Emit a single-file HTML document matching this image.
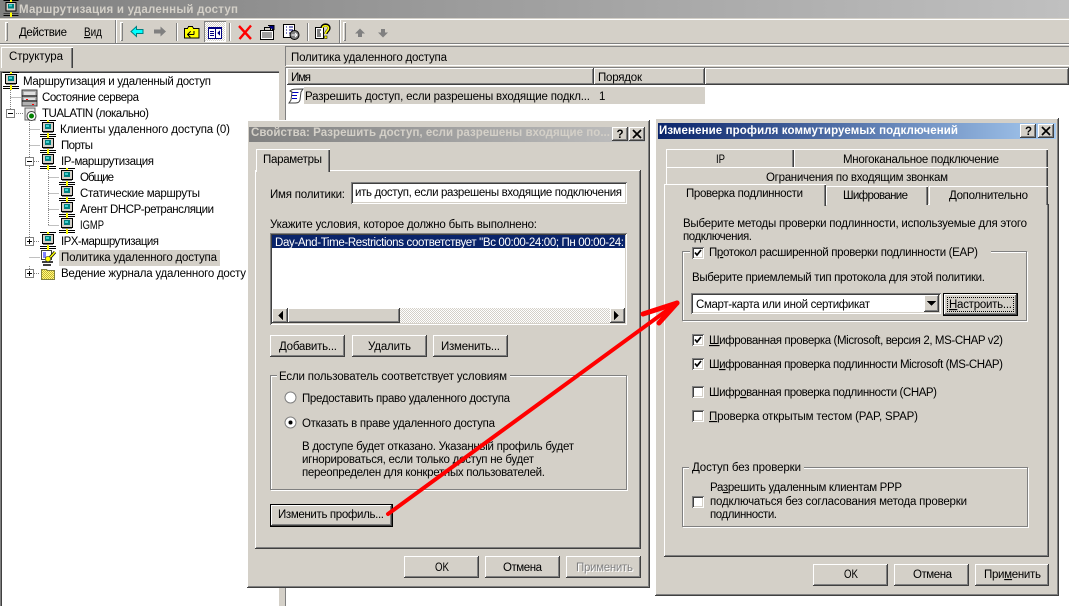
<!DOCTYPE html>
<html><head><meta charset="utf-8"><title>Маршрутизация и удаленный доступ</title>
<style>
html,body{margin:0;padding:0;width:1069px;height:606px;overflow:hidden;background:#fff}
.a{position:absolute;box-sizing:border-box}
.f{background:#d4d0c8}
.r{background:#d4d0c8;box-shadow:inset -1px -1px #404040,inset 1px 1px #fff,inset -2px -2px #808080}
.s{background:#fff;box-shadow:inset 1px 1px #808080,inset -1px -1px #fff,inset 2px 2px #404040,inset -2px -2px #d4d0c8}
.t{background:#d4d0c8;box-shadow:inset 1px 1px #fff,inset -1px 0 #404040,inset -2px 0 #808080}
.g{border:1px solid #808080;box-shadow:1px 1px #fff,inset 1px 1px #fff}
.c{background:#fff;width:12px;height:12px;box-shadow:inset 1px 1px #808080,inset -1px -1px #fff,inset 2px 2px #404040,inset -2px -2px #d4d0c8}
svg{position:absolute;left:0;top:0}
text{font-family:"Liberation Sans","Noto Sans CJK SC",sans-serif;font-size:11.5px;fill:#000;white-space:pre}
.b{font-weight:bold;font-size:11.5px}
.u{text-decoration:underline}
</style></head><body>

<!-- main window chrome -->
<div class="a" style="left:0;top:0;width:1069px;height:18px;background:linear-gradient(90deg,#808080,#c0c0c0)"></div>
<div class="a f" style="left:0;top:18px;width:1069px;height:54px"></div>
<div class="a" style="left:0;top:19px;width:1069px;height:1px;background:#fff"></div>
<div class="a" style="left:0;top:43px;width:1069px;height:1px;background:#808080"></div>
<div class="a" style="left:0;top:44px;width:1069px;height:1px;background:#fff"></div>
<div class="a" style="left:285px;top:46px;width:784px;height:1px;background:#808080"></div>
<div class="a" style="left:285px;top:65px;width:784px;height:1px;background:#fff"></div>
<div class="a" style="left:285px;top:46px;width:1px;height:20px;background:#808080"></div>

<!-- toolbar bevels -->
<div class="a" style="left:5px;top:22px;width:3px;height:19px;background:#d4d0c8;box-shadow:inset 1px 1px #fff,inset -1px -1px #808080"></div>
<div class="a" style="left:115px;top:20px;width:1px;height:23px;background:#808080"></div>
<div class="a" style="left:116px;top:20px;width:1px;height:23px;background:#fff"></div>
<div class="a" style="left:120px;top:22px;width:3px;height:19px;background:#d4d0c8;box-shadow:inset 1px 1px #fff,inset -1px -1px #808080"></div>
<div class="a" style="left:176px;top:23px;width:1px;height:18px;background:#808080"></div>
<div class="a" style="left:177px;top:23px;width:1px;height:18px;background:#fff"></div>
<div class="a" style="left:229px;top:23px;width:1px;height:18px;background:#808080"></div>
<div class="a" style="left:230px;top:23px;width:1px;height:18px;background:#fff"></div>
<div class="a" style="left:307px;top:23px;width:1px;height:18px;background:#808080"></div>
<div class="a" style="left:308px;top:23px;width:1px;height:18px;background:#fff"></div>
<div class="a" style="left:339px;top:20px;width:1px;height:23px;background:#808080"></div>
<div class="a" style="left:340px;top:20px;width:1px;height:23px;background:#fff"></div>
<div class="a" style="left:343px;top:22px;width:3px;height:19px;background:#d4d0c8;box-shadow:inset 1px 1px #fff,inset -1px -1px #808080"></div>
<div class="a" style="left:204px;top:21px;width:22px;height:21px;background:repeating-conic-gradient(#fff 0 25%,#d4d0c8 0 50%) 0 0/2px 2px;box-shadow:inset 1px 1px #808080,inset -1px -1px #fff"></div>

<!-- left tab -->
<div class="a t" style="left:1px;top:47px;width:72px;height:21px"></div>

<!-- tree pane -->
<div class="a" style="left:0;top:71px;width:279px;height:535px;background:#fff;box-shadow:inset 1px 1px #808080,inset 2px 2px #404040"></div>
<div class="a f" style="left:59px;top:250px;width:161px;height:16px"></div>
<div class="a f" style="left:279px;top:71px;width:6px;height:535px"></div>

<!-- right pane -->
<div class="a" style="left:285px;top:67px;width:784px;height:539px;background:#fff;box-shadow:inset 1px 1px #808080"></div>
<div class="a r" style="left:287px;top:68px;width:307px;height:17px"></div>
<div class="a r" style="left:594px;top:68px;width:111px;height:17px"></div>
<div class="a r" style="left:705px;top:68px;width:364px;height:17px"></div>
<div class="a f" style="left:304px;top:87px;width:401px;height:17px"></div>

<!-- dialog 1 -->
<div class="a r" style="left:247px;top:120px;width:403px;height:468px"></div>
<div class="a" style="left:249px;top:127px;width:396px;height:15px;background:linear-gradient(90deg,#808080,#c0c0c0)"></div>
<div class="a r" style="left:612px;top:127px;width:16px;height:14px"></div>
<div class="a r" style="left:629px;top:127px;width:16px;height:14px"></div>
<div class="a r" style="left:255px;top:170px;width:386px;height:379px"></div>
<div class="a t" style="left:256px;top:149px;width:74px;height:23px"></div>
<div class="a s" style="left:351px;top:182px;width:276px;height:22px"></div>
<div class="a s" style="left:270px;top:233px;width:357px;height:92px"></div>
<div class="a" style="left:272px;top:235px;width:353px;height:13px;background:#0a246a"></div>
<div class="a" style="left:288px;top:308px;width:322px;height:15px;background:repeating-conic-gradient(#fff 0 25%,#d4d0c8 0 50%) 0 0/2px 2px"></div>
<div class="a r" style="left:272px;top:308px;width:16px;height:15px"></div>
<div class="a r" style="left:288px;top:308px;width:112px;height:15px"></div>
<div class="a r" style="left:610px;top:308px;width:15px;height:15px"></div>
<div class="a r" style="left:270px;top:335px;width:75px;height:22px"></div>
<div class="a r" style="left:352px;top:335px;width:75px;height:22px"></div>
<div class="a r" style="left:433px;top:335px;width:75px;height:22px"></div>
<div class="a g" style="left:270px;top:375px;width:357px;height:115px"></div>
<div class="a f" style="left:277px;top:372px;width:233px;height:7px"></div>
<div class="a" style="left:270px;top:504px;width:123px;height:23px;background:#000"></div>
<div class="a r" style="left:271px;top:505px;width:121px;height:21px"></div>
<div class="a r" style="left:404px;top:556px;width:75px;height:22px"></div>
<div class="a r" style="left:485px;top:556px;width:75px;height:22px"></div>
<div class="a r" style="left:566px;top:556px;width:75px;height:22px"></div>

<!-- dialog 2 -->
<div class="a r" style="left:655px;top:118px;width:404px;height:478px"></div>
<div class="a" style="left:658px;top:123px;width:398px;height:16px;background:linear-gradient(90deg,#0a246a,#a6caf0)"></div>
<div class="a r" style="left:1020px;top:124px;width:16px;height:14px"></div>
<div class="a r" style="left:1038px;top:124px;width:16px;height:14px"></div>
<div class="a t" style="left:666px;top:149px;width:128px;height:20px"></div>
<div class="a t" style="left:794px;top:149px;width:254px;height:20px"></div>
<div class="a t" style="left:666px;top:167px;width:382px;height:20px"></div>
<div class="a r" style="left:664px;top:204px;width:385px;height:353px"></div>
<div class="a t" style="left:826px;top:186px;width:102px;height:19px"></div>
<div class="a t" style="left:929px;top:186px;width:119px;height:19px"></div>
<div class="a t" style="left:664px;top:184px;width:162px;height:22px"></div>
<div class="a g" style="left:682px;top:251px;width:345px;height:70px"></div>
<div class="a f" style="left:690px;top:247px;width:301px;height:8px"></div>
<div class="a s" style="left:691px;top:293px;width:250px;height:21px"></div>
<div class="a r" style="left:924px;top:295px;width:15px;height:17px"></div>
<div class="a" style="left:943px;top:293px;width:75px;height:23px;background:#000"></div>
<div class="a r" style="left:944px;top:294px;width:73px;height:21px"></div>
<div class="a" style="left:947px;top:297px;width:67px;height:15px;border:1px dotted #000"></div>
<div class="a g" style="left:682px;top:467px;width:346px;height:60px"></div>
<div class="a f" style="left:689px;top:464px;width:115px;height:7px"></div>
<div class="a c" style="left:692px;top:247px"></div>
<div class="a c" style="left:692px;top:334px"></div>
<div class="a c" style="left:692px;top:358px"></div>
<div class="a c" style="left:692px;top:386px"></div>
<div class="a c" style="left:692px;top:410px"></div>
<div class="a c" style="left:692px;top:496px"></div>
<div class="a r" style="left:813px;top:564px;width:75px;height:22px"></div>
<div class="a r" style="left:894px;top:564px;width:75px;height:22px"></div>
<div class="a r" style="left:975px;top:564px;width:74px;height:22px"></div>

<svg width="1069" height="606" viewBox="0 0 1069 606">
<defs>
<symbol id="net" width="16" height="19" viewBox="0 0 16 19" shape-rendering="crispEdges">
<rect x="0" y="0" width="16" height="1" fill="#000"/><rect x="7" y="0" width="2" height="2" fill="#ff0"/>
<rect x="2" y="2" width="12" height="10" fill="#000"/><rect x="3" y="3" width="10" height="8" fill="#d4d0c8"/><rect x="5" y="4" width="6" height="5" fill="#008080"/><rect x="6" y="5" width="3" height="2" fill="#40d0d0"/>
<rect x="3" y="12" width="10" height="1" fill="#808080"/>
<rect x="0" y="14" width="16" height="1" fill="#000"/><rect x="0" y="16" width="16" height="1" fill="#000"/><rect x="7" y="13" width="2" height="5" fill="#ff0"/>
</symbol>
<symbol id="plus" width="9" height="9" viewBox="0 0 9 9" shape-rendering="crispEdges"><rect x=".5" y=".5" width="8" height="8" fill="#fff" stroke="#808080"/><rect x="2" y="4" width="5" height="1"/><rect x="4" y="2" width="1" height="5"/></symbol>
<symbol id="minus" width="9" height="9" viewBox="0 0 9 9" shape-rendering="crispEdges"><rect x=".5" y=".5" width="8" height="8" fill="#fff" stroke="#808080"/><rect x="2" y="4" width="5" height="1"/></symbol>
<symbol id="chk" width="8" height="8" viewBox="0 0 8 8"><path d="M1 3.5 3 6 7 1" fill="none" stroke="#000" stroke-width="1.7"/></symbol>
<pattern id="hatch" width="2" height="2" patternUnits="userSpaceOnUse"><rect width="2" height="2" fill="#ffff80"/><rect width="1" height="1" fill="#c8b030"/><rect x="1" y="1" width="1" height="1" fill="#c8b030"/></pattern>
</defs>

<!-- tree dotted lines -->
<g stroke="#808080" stroke-dasharray="1 1" fill="none" shape-rendering="crispEdges">
<path d="M10.5 90V109M10.5 97.5H21M14 113.5H24"/>
<path d="M29.5 118V157M29.5 129.5H40M29.5 145.5H40M34 161.5H40M29.5 166V237M34 241.5H40M29.5 257.5H40M29.5 266V269M34 273.5H40"/>
<path d="M48.5 170V225.5M48.5 177.5H59M48.5 193.5H59M48.5 209.5H59M48.5 225.5H59"/>
</g>
<use href="#minus" x="6" y="109"/><use href="#minus" x="25" y="157"/><use href="#plus" x="25" y="237"/><use href="#plus" x="25" y="269"/>

<!-- tree icons -->
<use href="#net" x="3" y="72"/>
<use href="#net" x="40" y="120"/><use href="#net" x="40" y="136"/><use href="#net" x="40" y="152"/>
<use href="#net" x="59" y="168"/><use href="#net" x="59" y="184"/><use href="#net" x="59" y="200"/><use href="#net" x="59" y="216"/>
<use href="#net" x="40" y="232"/>
<g shape-rendering="crispEdges">
<rect x="22" y="90" width="15" height="16" fill="#b0b0b0" stroke="#404040"/><rect x="24" y="92" width="11" height="3" fill="#e0e0e0"/><path d="M22 96H37M22 101H37" stroke="#000"/><rect x="24" y="98" width="11" height="2" fill="#e0e0e0"/><rect x="32" y="104" width="2" height="1" fill="#f00"/><rect x="26" y="99" width="2" height="1" fill="#f00"/>
<rect x="25" y="108" width="10" height="12" fill="#e8e8e8" stroke="#606060"/>
</g>
<circle cx="31.500" cy="116" r="4.500" fill="#fff" stroke="#404040"/><circle cx="31.500" cy="116" r="2.500" fill="#008000"/>
<g>
<rect x="41.500" y="250.500" width="10" height="9" fill="#fff" stroke="#404040"/><path d="M43 253h3M43 255h3M43 257h3" stroke="#00f"/><path d="M42 262h11M43 265h8" stroke="#000" stroke-width="1.500"/><path d="M47 261l8-9" stroke="#000" stroke-width="3"/><path d="M47 261l8-9" stroke="#ff0" stroke-width="1.500"/><circle cx="48" cy="259" r="2.700" fill="#ff0" stroke="#404040" stroke-width=".7"/>
</g>
<g shape-rendering="crispEdges"><path d="M41.500 269.500h5l1 1h7v9h-13z" fill="url(#hatch)" stroke="#808040"/></g>

<!-- toolbar icons -->
<path d="M131 31.500 136.500 26.500V29.500H143V33.500H136.500V36.500Z" fill="#00ffff" stroke="#008080"/>
<path d="M166 31.500 160.500 26.500V29.500H154V33.500H160.500V36.500Z" fill="#808080"/>
<g shape-rendering="crispEdges"><path d="M184.500 28.500h3l1-2h4l1 2h5.500v9.500h-14.500z" fill="#ff0" stroke="#000"/><path d="M188 34.500h6M190.500 31.500l-3 3 3 3M194 34.500V31" fill="none" stroke="#000"/>
<rect x="208.500" y="27.500" width="13" height="11" fill="#fff" stroke="#000080"/><rect x="208" y="27" width="14" height="2" fill="#000080"/><rect x="215" y="29" width="1" height="9" fill="#000080"/><rect x="210" y="31" width="4" height="1" fill="#000080"/><rect x="210" y="33" width="4" height="1" fill="#000080"/><rect x="210" y="35" width="4" height="1" fill="#000080"/><path d="M220 30v6l-3-3z" fill="#000080"/></g>
<path d="M239 26 251 39M251 25.500 239.500 39" stroke="#f00" stroke-width="2.400" fill="none"/>
<g shape-rendering="crispEdges"><rect x="260.500" y="30.500" width="13" height="9" fill="#fff" stroke="#000"/><path d="M262 33h10M262 35h10M262 37h10" stroke="#404040"/><rect x="264.500" y="27.500" width="6" height="3" fill="#d4d0c8" stroke="#000"/><path d="M268 25.500h6v4h-2" fill="#000080" stroke="#000"/>
<rect x="283.500" y="24.500" width="11" height="13" fill="#fff" stroke="#000"/><path d="M286 27h1M289 27h4M286 30h1M289 30h4M286 33h1M289 33h3" stroke="#000080"/></g>
<circle cx="294.500" cy="35" r="4.500" fill="#808080" stroke="#000"/><path d="M291.500 35h5M295 33l2 2-2 2" stroke="#fff" fill="none"/>
<g shape-rendering="crispEdges"><path d="M315.500 27.500h8v11h-8z" fill="#fff" stroke="#000"/><path d="M317 30h4M317 32h3M317 34h4M317 36h4" stroke="#000"/></g>
<path d="M322 28c0-4 7-4 7 0 0 3-3 3-3 6" fill="none" stroke="#000" stroke-width="3.200"/><path d="M322.500 28c0-3 6-3 6 0 0 3-3 3-3 6" fill="none" stroke="#ff0" stroke-width="1.600"/><rect x="324.500" y="36" width="2.500" height="2.500" fill="#ff0" stroke="#000" stroke-width=".5"/>
<path d="M360 28.500 365 33.500H362V37H358V33.500H355Z" fill="#808080"/>
<path d="M383 37.500 388 32.500H385V29H381V32.500H378Z" fill="#808080"/>

<!-- title icon -->
<use href="#net" x="3" y="0" height="18"/>

<!-- main text -->
<text class="b" x="19" y="13" textLength="219" fill="#d4d0c8" style="fill:#d4d0c8">Маршрутизация и удаленный доступ</text>
<text x="19" y="36" textLength="48"><tspan class="u">Д</tspan>ействие</text>
<text x="84" y="36" textLength="18" lengthAdjust="spacingAndGlyphs"><tspan class="u">В</tspan>ид</text>
<text x="9" y="60" textLength="54">Структура</text>
<text x="291" y="61" textLength="156">Политика удаленного доступа</text>
<text x="291" y="81" textLength="20">Имя</text>
<text x="598" y="81" textLength="44">Порядок</text>
<path d="M290 91c2-2 4-2 13-2l-2 3-1 8c-1 3-3 3-6 3h-5l2-3 1-8z" fill="#fff" stroke="#404040"/><path d="M292.500 92.500h6M292 95.500h5M292 98.500h5" stroke="#0000c0"/>
<text x="305" y="100" textLength="285">Разрешить доступ, если разрешены входящие подкл...</text>
<text x="599" y="100">1</text>

<!-- tree text -->
<text x="23" y="85" textLength="188">Маршрутизация и удаленный доступ</text>
<text x="42" y="101" textLength="97">Состояние сервера</text>
<text x="42" y="117" textLength="107">TUALATIN (локально)</text>
<text x="60" y="133" textLength="170">Клиенты удаленного доступа (0)</text>
<text x="61" y="149" textLength="32">Порты</text>
<text x="61" y="165" textLength="93">IP-маршрутизация</text>
<text x="80" y="181" textLength="34">Общие</text>
<text x="80" y="197" textLength="120">Статические маршруты</text>
<text x="80" y="213" textLength="134">Агент DHCP-ретрансляции</text>
<text x="80" y="229" textLength="24" lengthAdjust="spacingAndGlyphs">IGMP</text>
<text x="61" y="245" textLength="98">IPX-маршрутизация</text>
<text x="61" y="261" textLength="156">Политика удаленного доступа</text>
<text x="61" y="277" textLength="185">Ведение журнала удаленного досту</text>

<!-- dialog 1 text -->
<text class="b" x="251" y="136" textLength="359" style="fill:#d4d0c8">Свойства: Разрешить доступ, если разрешены входящие по...</text>
<text x="263" y="163" textLength="59">Параметры</text>
<text x="270" y="198" textLength="75">Имя политики:</text>
<text x="355" y="196" textLength="267">ить доступ, если разрешены входящие подключения</text>
<text x="270" y="228" textLength="267">Укажите условия, которое должно быть выполнено:</text>
<text x="275" y="246" textLength="349" style="fill:#fff">Day-And-Time-Restrictions соответствует "Вс 00:00-24:00; Пн 00:00-24:</text>
<path d="M283 311v9l-5-4.500zM614 311v9l5-4.500z" fill="#000" shape-rendering="crispEdges"/>
<text x="279" y="350" textLength="58">Добавить...</text>
<text x="368" y="350" textLength="43">Удалить</text>
<text x="441" y="350" textLength="59">Изменить...</text>
<text x="279" y="380" textLength="228">Если пользователь соответствует условиям</text>
<g>
<circle cx="290.500" cy="397.500" r="5.500" fill="#fff" stroke="#808080"/>
<circle cx="290.500" cy="422.500" r="5.500" fill="#fff" stroke="#808080"/><circle cx="290.500" cy="422.500" r="2" fill="#000"/>
</g>
<text x="302" y="402" textLength="208">Предоставить право удаленного доступа</text>
<text x="302" y="427" textLength="193">Отказать в праве удаленного доступа</text>
<text x="302" y="450" textLength="272">В доступе будет отказано. Указанный профиль будет</text>
<text x="302" y="463" textLength="232">игнорироваться, если только доступ не будет</text>
<text x="302" y="476" textLength="243">переопределен для конкретных пользователей.</text>
<text x="278" y="518" textLength="106">Изменить профиль...</text>
<text x="435" y="571" textLength="14" lengthAdjust="spacingAndGlyphs">OK</text>
<text x="503" y="571" textLength="39">Отмена</text>
<text x="577" y="572" textLength="57" style="fill:#fff">Применить</text>
<text x="576" y="571" textLength="57" style="fill:#808080">Применить</text>
<text class="b" x="616.500" y="138" style="fill:#000">?</text>
<path d="M633 130l8 8M641 130l-8 8" stroke="#000" stroke-width="1.700"/>

<!-- dialog 2 text -->
<text class="b" x="659" y="134" textLength="299" style="fill:#fff">Изменение профиля коммутируемых подключений</text>
<text class="b" x="1025" y="135" style="fill:#000">?</text>
<path d="M1042 127l8 8M1050 127l-8 8" stroke="#000" stroke-width="1.700"/>
<text x="716" y="163" textLength="9" lengthAdjust="spacingAndGlyphs">IP</text>
<text x="843" y="163" textLength="156">Многоканальное подключение</text>
<text x="766" y="181" textLength="182">Ограничения по входящим звонкам</text>
<text x="686" y="197" textLength="117">Проверка подлинности</text>
<text x="843" y="199" textLength="65">Шифрование</text>
<text x="949" y="199" textLength="79">Дополнительно</text>
<text x="683" y="227" textLength="344">Выберите методы проверки подлинности, используемые для этого</text>
<text x="683" y="240" textLength="69">подключения.</text>
<text x="709" y="256" textLength="269">П<tspan class="u">р</tspan>отокол расширенной проверки подлинности (EAP)</text>
<text x="692" y="281" textLength="293">Выберите приемлемый тип протокола для этой политики.</text>
<text x="696" y="308" textLength="174">Смарт-карта или иной сертификат</text>
<path d="M927 301h9l-4.500 5z" fill="#000" shape-rendering="crispEdges"/>
<text x="949" y="308" textLength="63"><tspan class="u">Н</tspan>астроить...</text>
<text x="709" y="344" textLength="294"><tspan class="u">Ш</tspan>ифрованная проверка (Microsoft, версия 2, MS-CHAP v2)</text>
<text x="709" y="368" textLength="294">Ш<tspan class="u">и</tspan>фрованная проверка подлинности Microsoft (MS-CHAP)</text>
<text x="709" y="396" textLength="228">Шифр<tspan class="u">о</tspan>ванная проверка подлинности (CHAP)</text>
<text x="709" y="420" textLength="209"><tspan class="u">П</tspan>роверка открытым тестом (PAP, SPAP)</text>
<text x="692" y="471" textLength="109">Доступ без проверки</text>
<text x="710" y="491" textLength="192">Ра<tspan class="u">з</tspan>решить удаленным клиентам PPP</text>
<text x="710" y="505" textLength="257">подключаться без согласования метода проверки</text>
<text x="710" y="518" textLength="67">подлинности.</text>
<use href="#chk" x="694" y="249"/><use href="#chk" x="694" y="336"/><use href="#chk" x="694" y="360"/>
<text x="844" y="578" textLength="14" lengthAdjust="spacingAndGlyphs">OK</text>
<text x="913" y="578" textLength="39">Отмена</text>
<text x="984" y="578" textLength="57">При<tspan class="u">м</tspan>енить</text>

<!-- red arrow -->
<g stroke="#f00" fill="none" stroke-linecap="round" stroke-linejoin="round">
<path d="M388 514 677 303" stroke-width="4"/>
<path d="M643 314 677 303" stroke-width="5"/>
<path d="M659 323 677 303" stroke-width="5"/>
<path d="M650 312 674 304" stroke-width="3"/>
</g>
</svg>
</body></html>
